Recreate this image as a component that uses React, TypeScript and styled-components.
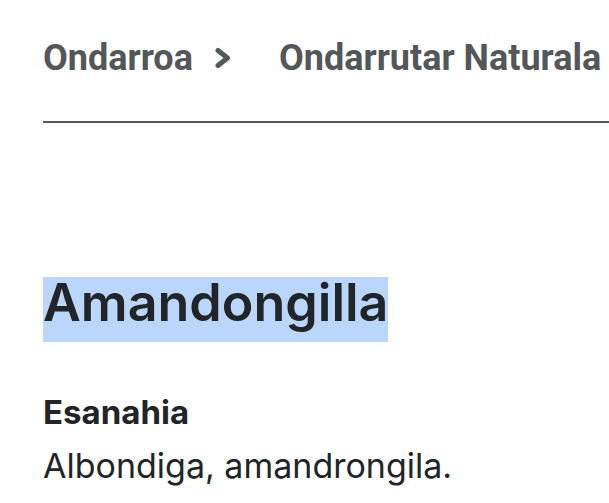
import React from "react";
import styled, { createGlobalStyle } from "styled-components";

const Global = createGlobalStyle`
  html, body { margin: 0; padding: 0; background: #ffffff; }
  body { overflow: hidden; }
`;

const Page = styled.div`
  padding: 37px 0 0 43px;
  width: 566px;
  font-family: Inter, "Liberation Sans", sans-serif;
  color: #212529;
`;

const Breadcrumb = styled.nav`
  display: flex;
  align-items: center;
  white-space: nowrap;
  font-family: Roboto, "Liberation Sans", sans-serif;
  font-weight: 700;
  font-size: 36px;
  line-height: 42px;
  color: #53575a;
  padding-bottom: 42px;
  border-bottom: 2px solid #53575a;
`;

const Crumb = styled.span``;

const Sep = styled.svg`
  display: block;
  margin: 0 47px 0 21px;
  flex: none;
`;

const Heading = styled.h1`
  margin: 154px 0 0;
  font-size: 52px;
  font-weight: 600;
  line-height: 0;
`;

const Selected = styled.span`
  display: inline-block;
  background: #bad6fb;
  line-height: 52px;
  padding-bottom: 13px;
`;

const Term = styled.div`
  margin-top: 51px;
  font-size: 33px;
  font-weight: 700;
  line-height: 38px;
`;

const Definition = styled.div`
  margin-top: 15px;
  font-size: 34px;
  font-weight: 400;
  line-height: 40px;
`;

export default function App() {
  return (
    <>
      <Global />
      <Page>
        <Breadcrumb>
          <Crumb>Ondarroa</Crumb>
          <Sep width="18" height="22" viewBox="0 0 18 22">
            <polyline
              points="4,3.5 13.5,11 4,18.5"
              fill="none"
              stroke="#53575a"
              strokeWidth="5"
              strokeLinejoin="round"
              strokeLinecap="round"
            />
          </Sep>
          <Crumb>Ondarrutar Naturala</Crumb>
        </Breadcrumb>
        <Heading>
          <Selected>Amandongilla</Selected>
        </Heading>
        <Term>Esanahia</Term>
        <Definition>Albondiga, amandrongila.</Definition>
      </Page>
    </>
  );
}
